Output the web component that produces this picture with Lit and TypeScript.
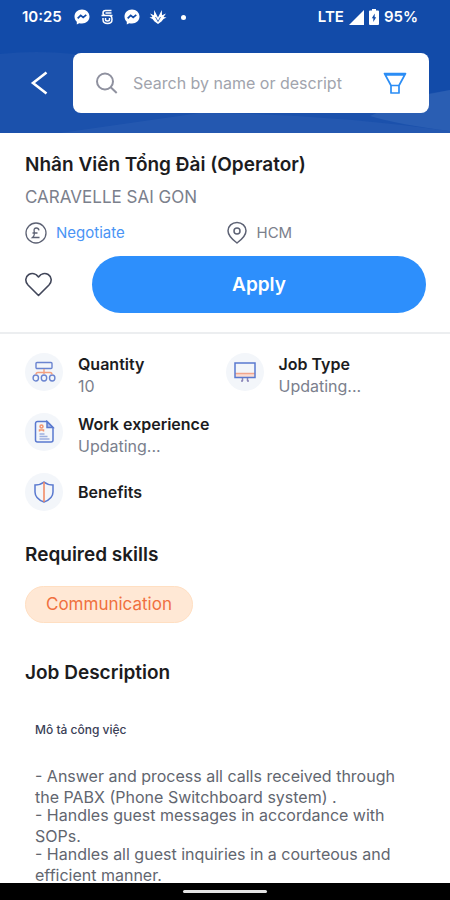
import { LitElement, html, css, svg } from "lit";
import { customElement } from "lit/decorators.js";

const icons = {
  quantity: svg`<g fill="none" stroke="#6a84d0" stroke-width="1.400"><rect x="4" y="2.500" width="16" height="6" rx="1"/><ellipse cx="3.800" cy="18" rx="2.700" ry="3"/><ellipse cx="12" cy="18" rx="2.700" ry="3"/><ellipse cx="20.200" cy="18" rx="2.700" ry="3"/><path stroke="#f2a07f" d="M12 9v5M4 14.500q0-2 2-2h12q2 0 2 2"/></g>`,
  jobType: svg`<path fill="#fbdcd2" d="M2 14h20v3H2z"/><g fill="none" stroke-width="1.500"><path stroke="#f2a68c" d="M2 13.500h20"/><path stroke="#5a79cf" d="M2 3h20v14.500H2z"/><path stroke="#8a85b8" d="M9.500 18v3M14.500 18v3M8 21h2M14 21h2"/></g>`,
  work: svg`<g fill="none" stroke="#5a79cf" stroke-width="1.500"><path d="M5.500 1.500H15l6 6V20a2 2 0 0 1-2 2H5.500a2 2 0 0 1-2-2v-16.500a2 2 0 0 1 2-2z"/><path fill="#a9bbe8" d="M15 1.500v6h6z"/><path stroke="#9dafe0" d="M7.500 14h5M7.500 16.500h8M7.500 19h10"/><g stroke="#f2946f"><circle cx="9.500" cy="6.500" r="1.500"/><path d="M7.500 11.500V10h4v1.500"/></g></g>`,
  benefits: svg`<g fill="none" stroke="#5a79cf" stroke-width="1.500"><path d="M12 2c2.500 2 5.500 3 9 3v7c0 5-3.500 8-9 10-5.500-2-9-5-9-10V5c3.500 0 6.500-1 9-3z"/><path stroke="#f2845c" d="M12 2v20"/></g>`,
};

const messenger = html`<svg width="16" height="16" viewBox="0 0 16 16" aria-hidden="true"><path fill="#fff" d="M8 .5C3.700.5.5 3.600.5 7.600c0 2.100.9 3.900 2.300 5.200V15.500l2.400-1.300c.9.300 1.800.4 2.800.4 4.300 0 7.500-3.100 7.500-7S12.300.5 8 .5z"/><path fill="none" stroke="#124ba9" stroke-width="1.700" d="M3.700 9.400l3-3.100 2.500 2.200 3.100-2.600"/></svg>`;

@customElement("app-root")
export class AppRoot extends LitElement {
  static styles = css`
    :host {
      display: flex;
      flex-direction: column;
      height: 100vh;
      overflow: hidden;
      background: #fff;
      color: #1c1c1e;
      font-family: Inter, "Noto Sans", sans-serif;
      font-size: 16px;
      line-height: 22px;
    }
    * { box-sizing: border-box; }
    svg { display: block; flex: none; }
    button { padding: 0; border: 0; background: none; font: inherit; color: inherit; cursor: pointer; }
    h1, h2, h3, p { margin: 0; }

    .top { position: relative; flex: none; height: 133px; background: #124ba9; }
    .waves { position: absolute; inset: 0; width: 100%; height: 100%; }
    .status, .bar { position: relative; display: flex; align-items: center; }
    .status { height: 34px; padding: 0 32px 0 22px; color: #fff; font-size: 15px; font-weight: 600; }
    .notes { display: flex; align-items: center; gap: 9px; margin-left: 12px; }
    .dot { width: 5px; height: 5px; margin-left: 5px; border-radius: 50%; background: #fff; }
    .signals { display: flex; align-items: center; gap: 5px; margin-left: auto; }
    .bar { padding: 19px 21px 0 28px; gap: 21px; }
    .back { width: 24px; height: 32px; }
    .search { flex: 1; min-width: 0; height: 60px; display: flex; align-items: center; padding: 0 22px; gap: 15px; border-radius: 8px; background: #fff; }
    .search input { flex: 1; min-width: 0; margin-right: 20px; padding: 0; border: 0; outline: 0; background: none; font: inherit; color: #333; }
    .search input::placeholder { color: #a1a4ad; opacity: 1; }

    .page { flex: 1; min-height: 0; overflow: hidden; }
    .summary { padding: 20px 24px 19px 25px; border-bottom: 2px solid #eceef0; }
    h1, h2 { font-size: 19px; line-height: 24px; font-weight: 600; }
    h2 { font-size: 19px; }
    .company { margin-top: 9px; font-size: 17px; color: #7b808c; }
    .meta, .facts { display: grid; grid-template-columns: 1fr 1fr; }
    .meta { margin-top: 13px; font-size: 15px; }
    .meta span { display: flex; align-items: center; gap: 9px; color: #7b808c; }
    .meta .pay { color: #4a94f5; }
    .actions { display: flex; align-items: center; gap: 40px; margin-top: 11px; }
    .actions .apply { flex: 1; height: 57px; border-radius: 29px; background: #2d8ffc; color: #fff; font-size: 19px; font-weight: 600; }

    .facts { padding: 19px 24px 0 25px; row-gap: 16px; }
    .fact { display: flex; gap: 15px; min-height: 38px; color: #7b7f8d; }
    .wide { grid-column: 1 / -1; }
    .single { align-items: center; }
    .disc { display: grid; place-items: center; flex: none; width: 38px; height: 38px; border-radius: 50%; background: #f3f6fa; }
    h3 { font-size: 16px; line-height: 22px; font-weight: 600; color: #1c1c1e; }

    .section { padding: 0 25px; }
    .skills { margin-top: 32px; }
    .chip { display: block; width: fit-content; margin-top: 19px; padding: 6px 20px; border: 1px solid #ffdfc2; border-radius: 19px; background: #ffe8d5; color: #f0703f; font-size: 17px; line-height: 23px; }
    .about { margin-top: 38px; }
    .text { padding: 36px 10px 0; color: #62666f; }
    .lead { margin-bottom: 27px; color: #3a4056; font-size: 12px; font-weight: 500; line-height: 18px; }
    .duty { margin-bottom: -3px; line-height: 21px; }

    .nav { flex: none; display: flex; justify-content: center; align-items: center; height: 17px; background: #000; }
    .handle { width: 84px; height: 3px; border-radius: 2px; background: #e4e4e4; }
  `;

  private fact(icon: unknown, title: string, value = "", extra = "") {
    return html`<div class="fact ${extra}">
      <span class="disc"><svg width="24" height="24" viewBox="0 0 24 24" aria-hidden="true">${icon}</svg></span>
      <div><h3>${title}</h3>${value ? html`<p>${value}</p>` : ""}</div>
    </div>`;
  }

  render() {
    return html`
      <header class="top">
        <svg class="waves" viewBox="0 0 450 133" preserveAspectRatio="none" aria-hidden="true">
          <path fill="#1b51ac" d="M0 54q36-4 74 0l100 58q120 4 276-22v43H0z"/>
          <path fill="#2458b0" d="M200 113q120 0 250 18v2H60z"/>
          <path fill="#2a5eb3" d="M370 116q40-20 80-26v41q-50-6-80-15z"/>
        </svg>
        <div class="status">
          <span>10:25</span>
          <div class="notes">
            ${messenger}
            <svg width="16" height="16" viewBox="0 0 16 16" aria-hidden="true"><path fill="none" stroke="#fff" stroke-width="1.500" d="M12.500 1.500H6.500Q4 1.500 4 4t2.500 2.500H10Q13 6.500 13 10.500T8.500 14.500 4 10.500V9M2.500 6.500h11M6.500 4h6M6.500 9v1.500q0 1.500 2 1.500t2-1.500V9"/></svg>
            ${messenger}
            <svg width="18" height="16" viewBox="0 0 18 16" aria-hidden="true"><path fill="#fff" d="M9 15L5.500 12.500 3.500 10 .5 8.500l3-.5L1 4.500l4 1.700L5.200 1 9 8.500 12.800 1l.2 5.200 4-1.700L14.500 8l3 .5-3 1.500-2 2.500z"/><path fill="none" stroke="#124ba9" stroke-width=".8" d="M6.500 8L9 12.500 11.500 8"/></svg>
            <span class="dot"></span>
          </div>
          <div class="signals">
            <span>LTE</span>
            <svg width="15" height="15" viewBox="0 0 15 15" aria-hidden="true"><path fill="#fff" d="M15 0v15H0z"/></svg>
            <svg width="10" height="16" viewBox="3 0 10 16" aria-hidden="true"><path fill="#fff" d="M6 0h4v1.500h2q1 0 1 1V15q0 1-1 1H4q-1 0-1-1V2.500q0-1 1-1h2z"/><path fill="#124ba9" d="M8.700 4.500v3.700h1.500L7.300 13V9.300H5.800z"/></svg>
            <span>95%</span>
          </div>
        </div>
        <div class="bar">
          <button class="back" aria-label="Back"><svg width="24" height="32" viewBox="0 0 24 32"><path fill="none" stroke="#fff" stroke-width="2.600" d="M18.500 5.500L5 16l13.500 10.500"/></svg></button>
          <label class="search">
            <svg width="23" height="24" viewBox="0 0 23 24" aria-hidden="true"><g fill="none" stroke="#8f919f" stroke-width="2"><circle cx="10" cy="10.500" r="8"/><path d="M15.700 16.200l6 5.800"/></g></svg>
            <input type="text" aria-label="Search" placeholder="Search by name or descript" />
            <button aria-label="Filter"><svg width="24" height="24" viewBox="0 0 24 24"><path fill="none" stroke="#2b8df5" stroke-width="1.700" stroke-linejoin="round" d="M1.500 2.500h21L16 14.500H8zM3 4h18M8 14.500h8V22H8z"/></svg></button>
          </label>
        </div>
      </header>

      <main class="page">
        <section class="summary">
          <h1>Nhân Viên Tổng Đài (Operator)</h1>
          <p class="company">CARAVELLE SAI GON</p>
          <div class="meta">
            <span class="pay"><svg width="22" height="22" viewBox="0 0 22 22" aria-hidden="true"><g fill="none" stroke="#5d6274" stroke-width="1.300"><circle cx="11" cy="11" r="10"/><path d="M14 8.300Q13.500 6 11.400 6 8.500 6 9.200 9.500 10 13.500 7.500 15.500H14.500M7.500 11h5"/></g></svg>Negotiate</span>
            <span><svg width="22" height="24" viewBox="0 0 22 24" aria-hidden="true"><g fill="none" stroke="#5d6274" stroke-width="1.500"><path d="M11 22Q2 15.500 2 9.800C2 5 6 1.500 11 1.500S20 5 20 9.800Q20 15.500 11 22z"/><circle cx="11" cy="10" r="3"/></g></svg>HCM</span>
          </div>
          <div class="actions">
            <button aria-label="Save job"><svg width="27" height="26" viewBox="0 0 27 26"><path fill="none" stroke="#42475a" stroke-width="1.600" stroke-linejoin="round" d="M13.500 23.500L3 13C-.3 9.500.3 4.800 3.800 2.500 7 .8 11 1.500 13.500 5 16 1.500 20 .8 23.200 2.500 26.700 4.800 27.300 9.500 24 13z"/></svg></button>
            <button class="apply">Apply</button>
          </div>
        </section>

        <section class="facts">
          ${this.fact(icons.quantity, "Quantity", "10")}
          ${this.fact(icons.jobType, "Job Type", "Updating...")}
          ${this.fact(icons.work, "Work experience", "Updating...", "wide")}
          ${this.fact(icons.benefits, "Benefits", "", "wide single")}
        </section>

        <section class="section skills">
          <h2>Required skills</h2>
          <span class="chip">Communication</span>
        </section>

        <section class="section about">
          <h2>Job Description</h2>
          <div class="text">
            <p class="lead">Mô tả công việc</p>
            <p class="duty">- Answer and process all calls received through the PABX (Phone Switchboard system) .</p>
            <p class="duty">- Handles guest messages in accordance with SOPs.</p>
            <p class="duty">- Handles all guest inquiries in a courteous and efficient manner.</p>
          </div>
        </section>
      </main>
      <footer class="nav"><span class="handle"></span></footer>
    `;
  }
}
